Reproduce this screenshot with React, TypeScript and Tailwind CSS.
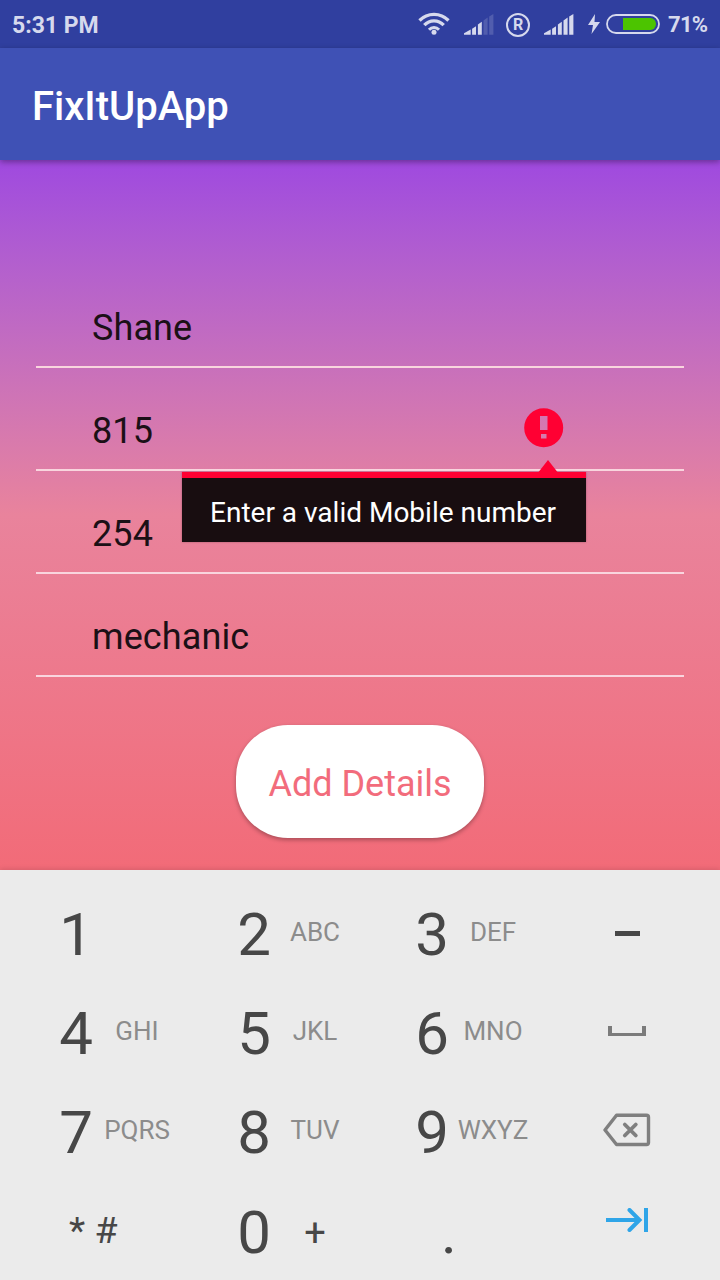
import React from "react";

const fields = ["Shane", "815", "254", "mechanic"];

function Wifi() {
  return (
    <svg className="h-6 w-8 shrink-0" viewBox="0 0 32 24" fill="none" stroke="#d6d9ed">
      <path d="M1.500 8.500C9.500 .4 22.500 .4 30.500 8.500" strokeWidth="3.300" />
      <path d="M6.300 13.200C11.700 7.400 20.300 7.400 25.700 13.200" strokeWidth="3.300" />
      <path d="M11 17.700C13.800 14.700 18.200 14.700 21 17.700" strokeWidth="3" />
      <circle cx="16" cy="20.200" r="2.500" fill="#d6d9ed" stroke="none" />
    </svg>
  );
}

function Signal({ weak = false }: { weak?: boolean }) {
  const faded = weak ? 0.2 : 1;
  return (
    <svg className="h-6 w-8 shrink-0" viewBox="0 0 32 24" fill="#d6d9ed">
      <path d="M-.300 22.800V21.500L6.700 17.500v5.300z" />
      <path d="M8.100 16.700L12 14.200v8.600H8.100z" />
      <path d="M13.900 12.600L17.800 9.800v13H13.900z" />
      <path d="M19.500 8.600L23.600 5.600v17.200H19.500z" opacity={faded} />
      <path d="M25.200 4.600L29.400 2v20.800H25.200z" opacity={faded} />
    </svg>
  );
}

function Registered() {
  return (
    <span className="mt-px flex h-6 w-6 shrink-0 items-center justify-center rounded-full border-2 border-[#d6d9ed] text-base leading-none font-bold">
      R
    </span>
  );
}

function Battery() {
  return (
    <svg className="h-5 w-[54px] shrink-0" viewBox="0 0 54 20">
      <rect x="1" y="1" width="52" height="18" rx="9" fill="none" stroke="#d6d9ed" strokeWidth="1.800" />
      <path d="M17 4h27.500a5.500 6 0 0 1 0 12H17z" fill="#4cc400" />
    </svg>
  );
}

function StatusBar() {
  return (
    <div className="flex h-12 items-center bg-[#303f9f] pr-[12px] pl-3 text-[#d6d9ed]">
      <span className="mt-1 text-[23px] leading-7 font-bold">5:31 PM</span>
      <div className="ml-auto flex items-center">
        <Wifi />
        <span className="w-3.5" />
        <Signal weak />
        <span className="w-2.5" />
        <Registered />
        <span className="w-3.5" />
        <Signal />
        <span className="w-3" />
        <svg className="h-5 w-3 shrink-0" viewBox="0 0 12 20" fill="#d6d9ed">
          <path d="M7 0L0 11h5L3.500 20 12 8H6.500z" />
        </svg>
        <span className="w-1.5" />
        <Battery />
        <span className="mt-0.5 ml-2 w-10 text-[22px] leading-7 font-bold tracking-[-0.700px]">71%</span>
      </div>
    </div>
  );
}

function ErrorBadge() {
  return (
    <svg className="absolute top-[40px] left-[488px] h-10 w-10" viewBox="0 0 40 40">
      <path
        fill="#ff0033"
        fillRule="evenodd"
        d="M19.700.300a19.500 19.500 0 1 0 0 39 19.500 19.500 0 0 0 0-39zM16 8h7.500v14H16zM17 26h5.500v4.500H17z"
      />
    </svg>
  );
}

function ErrorPopup() {
  return (
    <div className="absolute top-[104px] left-[146px] z-10 h-[70px] w-[404px] border-t-6 border-[#ff0033] bg-[#180d10] shadow-[0_0_2px_rgba(0,0,0,0.3)]">
      <svg className="absolute -top-[18px] left-[355px] h-3.5 w-[22px]" viewBox="0 0 22 14">
        <path d="M11 0L22 14H0z" fill="#ff0033" />
      </svg>
      <div className="flex h-16 items-center pt-1.5 pl-7 text-[28px] tracking-normal whitespace-nowrap text-white">
        Enter a valid Mobile number
      </div>
    </div>
  );
}

function Key({ digit, letters, plus }: { digit: string; letters?: string; plus?: boolean }) {
  return (
    <div className="flex items-center pl-[50px]">
      <span className="flex w-[52px] justify-center text-[60px] leading-none text-[#474747]">{digit}</span>
      <span
        className={
          plus
            ? "flex w-[70px] justify-center text-[38px] leading-none text-[#474747]"
            : "-mt-1.5 flex w-[70px] justify-center text-[26px] leading-none text-[#8c8c8c]"
        }
      >
        {letters}
      </span>
    </div>
  );
}

function Keypad() {
  return (
    <div className="z-10 grid h-[410px] grid-cols-[178px_178px_178px_186px] grid-rows-[99px_99px_99px_99px] gap-y-[0.400px] bg-[#ebebeb] pt-[15px] shadow-[0_-1px_5px_rgba(0,0,0,0.12)]">
      <Key digit="1" />
      <Key digit="2" letters="ABC" />
      <Key digit="3" letters="DEF" />
      <div className="flex items-center justify-center">
        <span className="-mt-0.5 h-[5px] w-[25px] bg-[#474747]" />
      </div>
      <Key digit="4" letters="GHI" />
      <Key digit="5" letters="JKL" />
      <Key digit="6" letters="MNO" />
      <div className="flex items-center justify-center">
        <span className="-mt-1.5 h-2.5 w-[38px] border-x-4 border-b-3 border-[#7b7b7b]" />
      </div>
      <Key digit="7" letters="PQRS" />
      <Key digit="8" letters="TUV" />
      <Key digit="9" letters="WXYZ" />
      <div className="flex items-center justify-center">
        <svg className="-mt-1.5 h-[34px] w-12" viewBox="0 0 48 34" fill="none" stroke="#7f7f7f">
          <path d="M13.500 2.200H43.500Q45.500 2.200 45.500 4.200V29.500Q45.500 31.500 43.500 31.500H13.500L2 17z" strokeWidth="3.400" strokeLinejoin="round" />
          <path d="M21.800 11.500l11 11M32.800 11.500l-11 11" strokeWidth="3.800" strokeLinecap="round" />
        </svg>
      </div>
      <div className="-mt-1 flex items-center pl-[69px] text-[37.500px] leading-none text-[#474747]">* #</div>
      <Key digit="0" letters="+" plus />
      <div className="flex items-center pl-[85px] text-[60px] leading-none text-[#474747]">.</div>
      <div className="flex items-center justify-center">
        <svg className="-mt-[25px] h-6 w-[42px]" viewBox="0 0 42 24" fill="none" stroke="#2fa5e8" strokeWidth="4">
          <path d="M0 12H33" />
          <path d="M23.500 2L33.500 12 23.500 22" strokeLinecap="round" />
          <path d="M40 0V24" />
        </svg>
      </div>
    </div>
  );
}

export default function App() {
  return (
    <div className="flex h-[1280px] w-[720px] flex-col overflow-hidden font-['Roboto',sans-serif]">
      <StatusBar />
      <header className="z-10 flex h-28 items-center bg-[#3f51b5] pt-[6px] pl-8 text-[40px] font-medium text-white shadow-[0_2px_6px_rgba(0,0,0,0.35)]">
        FixItUpApp
      </header>
      <main className="flex h-[710px] flex-col items-center bg-linear-to-b from-[#9f49df] via-[#e9839c] to-[#f26b78] pt-[105px]">
        <div className="relative w-[648px]">
          {fields.map((value, i) => (
            <div
              key={value}
              className="relative flex h-[103px] items-center border-b-2 border-[#f9d5de] pt-[24px] pl-14 text-[36px] tracking-[0.100px] text-[#1b1016]"
            >
              {value}
              {i === 1 && <ErrorBadge />}
              {i === 1 && <ErrorPopup />}
            </div>
          ))}
        </div>
        <button className="mt-12 flex h-[113px] w-[248px] items-center justify-center rounded-[52px] bg-white pt-1 text-[36px] text-[#f26c7c] shadow-[0_2px_4px_rgba(0,0,0,0.3)]">
          Add Details
        </button>
      </main>
      <Keypad />
    </div>
  );
}
